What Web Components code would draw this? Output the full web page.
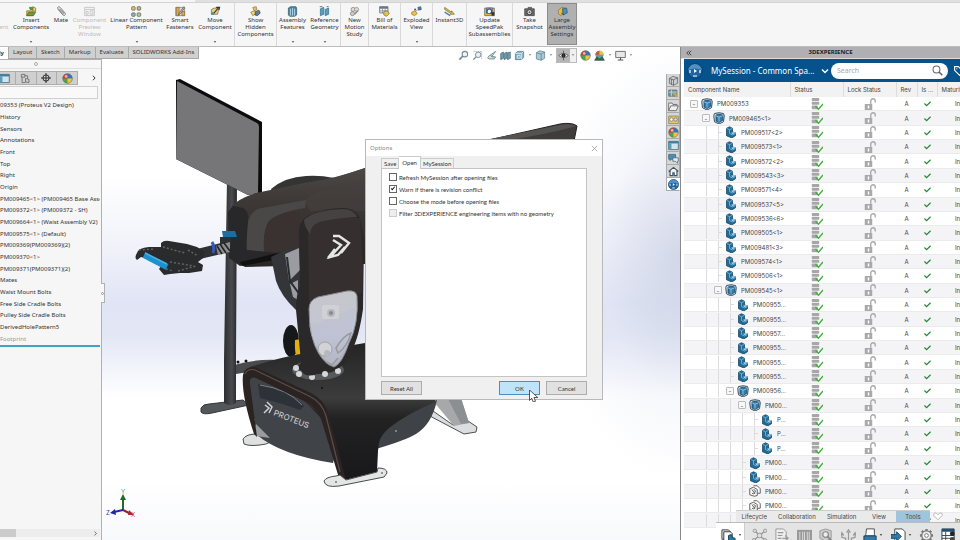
<!DOCTYPE html>
<html lang="en">
<head>
<meta charset="utf-8">
<title>Proteus V2 Design</title>
<style>
  html, body { margin: 0; height: 100%; overflow: hidden; }
  body { font-family: "Noto Sans", "Open Sans", sans-serif; font-size: 6px; line-height: 7px; color: #333; }
</style>
</head>
<body>
<cad-app></cad-app>

<script>
// All icons share a 16x16 box
const ICONS = {
  insert: '<path d="M1 7h9v7H1z" fill="#e6b83c" stroke="#8a6d1b"/><path d="M5 2h5l1 3H6z" fill="#57a04a" stroke="#2f6b2a"/><path d="M10 1l4 2v5l-4-1z" fill="#f1d064" stroke="#7b6a2a"/><path d="M1 14l3-5h10l-3 5z" fill="#6d9a3c" stroke="#4c6330"/>',
  clip: '<path d="M3 5l7 8c2 2 5 0 3-3L6 2C4 0 1 2 3 4l7 7c1 1 2 0 1-1L5 4" fill="none" stroke="#777" stroke-width="1.4"/>',
  preview: '<path d="M1 2h14v12H1zM1 5h14M3 8h3v4H3zM9 7h4v5H9z" fill="none" stroke="#c4c4c4" stroke-width="1.3"/>',
  pattern: '<g fill="#e3c66a" stroke="#555"><rect x="1" y="1" width="5" height="5" rx="1"/><rect x="9" y="1" width="5" height="5" rx="1" fill="#a8c18d"/><rect x="1" y="10" width="5" height="5" rx="1" fill="#8fb4c9"/><rect x="9" y="10" width="5" height="5" rx="1" fill="#b9c98b"/></g>',
  fasteners: '<path d="M1 2h13v12H1z" fill="#ddd" stroke="#777"/><path d="M2 2h4v12H2zM10 8h4v6h-4z" fill="#e0a94b" stroke="#8d6a32"/><path d="M13 1L6 10l-1 3 3-2 6-8z" fill="#bbb" stroke="#555"/>',
  move: '<path d="M2 5l4-2h7l-2 9H2z" fill="#e9cd77" stroke="#665"/><path d="M5 11l7-8M9 2l5 0-1 4" fill="none" stroke="#333" stroke-width="1.5"/><path d="M2 9l4 0v4H2z" fill="#4f8f9f"/>',
  show: '<path d="M4 2l5-1 1 4-4 2z" fill="#edc454" stroke="#8d722c"/><path d="M1 9l6-2 2 4-5 3z" fill="#f3d77b" stroke="#8d722c"/><path d="M8 8l5-2 2 4-4 4-4-1z" fill="#667b93" stroke="#33485f"/>',
  assembly: '<path d="M2 3l3-2h8l1 2v10l-3 2H4l-2-2z" fill="#4688a8" stroke="#2d566b"/><path d="M5 4v10M8 3v11M11 4v10" stroke="#b5d8e6" stroke-width="1.3"/>',
  geometry: '<path d="M2 4l5-2v10l-5 2zM9 5l5-2v9l-5 2z" fill="#57a0bf" stroke="#2d6b8a"/><path d="M1 1h4M11 1l3 0" stroke="#333"/>',
  motion: '<circle cx="6" cy="5" r="3" fill="#ddd" stroke="#777"/><circle cx="11" cy="5" r="3" fill="#e6d6d6" stroke="#887"/><circle cx="5" cy="11" r="3" fill="#ccc" stroke="#777"/><path d="M8 12l5-5" stroke="#888" stroke-width="2"/>',
  bom: '<path d="M1 1h12v9H1z" fill="#fff" stroke="#446"/><path d="M1 1h12v3H1z" fill="#678"/><path d="M5 4v6M9 4v6M1 7h12" stroke="#778"/><path d="M7 8l5-1 3 4-4 4-4-2z" fill="#e8c24f" stroke="#5f7a36"/>',
  exploded: '<path d="M1 9l5-2 3 4-4 3-4-2z" fill="#ecc44a" stroke="#8d722c"/><path d="M10 2l4-1 1 4-4 1z" fill="#4b83a8" stroke="#284f6b"/><path d="M7 8l3-3" stroke="#777"/><circle cx="6" cy="5" r="1.5" fill="#557"/>',
  instant: '<path d="M1 2l10 7 0-2 4 5-6 0 1-1L1 5z" fill="#eac64d" stroke="#6e6330"/><path d="M1 9l8 5" stroke="#4b83a8" stroke-width="2"/>',
  update: '<path d="M1 3h14v11H1z" fill="#e8bf4c" stroke="#555"/><path d="M4 3h8v8H4z" fill="#fff" stroke="#335"/><path d="M5 10a3.500 3.500 0 1 1 4 1" fill="none" stroke="#245b86" stroke-width="2"/><path d="M11 9h4v5h-4z" fill="#333"/>',
  camera: '<path d="M1 4h4l1-2h5l1 2h3v10H1z" fill="#666" stroke="#444"/><circle cx="8" cy="9" r="3.500" fill="#eee" stroke="#222"/><circle cx="8" cy="9" r="1.500" fill="#555"/>',
  large: '<path d="M2 6l5-4 5 1-4 3 1 4-3 4-4-3z" fill="#edbd3f" stroke="#8d722c"/><path d="M8 4l6-1 1 7-6 3z" fill="#4a90b7" stroke="#285a78"/><path d="M6 10l4 3" stroke="#333"/>',
  zoomfit: '<circle cx="10" cy="6" r="4" fill="#eef4f7" stroke="#789" stroke-width="1.500"/><path d="M7 9l-5 5" stroke="#789" stroke-width="2.500"/>',
  zoomarea: '<path d="M2 2h12v11" fill="none" stroke="#8899a3" stroke-dasharray="2 1"/><circle cx="9" cy="7" r="4" fill="#e8f0f4" stroke="#789" stroke-width="1.300"/><path d="M6 10l-4 4" stroke="#789" stroke-width="2"/>',
  prev: '<path d="M14 2L4 9q-3 3 0 4h8l2-3H8z" fill="#dbe6ea" stroke="#688" stroke-width="1.300"/><path d="M6 8l6 2" stroke="#688"/>',
  section: '<path d="M1 5l4-2v9l-4 2zM6 5l4-2v9l-4 2zM11 4l4-1v9l-4 2z" fill="#6f9eae" stroke="#456874"/>',
  orient: '<path d="M2 5l3-3h9v9l-3 3H2z" fill="#86b3c3" stroke="#4d7381"/><path d="M2 5h9v9M11 5l3-3M5 8h4v4H5z" fill="none" stroke="#eaf4f7"/>',
  cube: '<path d="M2 4l5-3 7 2v9l-5 3-7-2z" fill="#a7cbd7" stroke="#557b88"/><path d="M2 4l7 2 5-3M9 6v9" fill="none" stroke="#557b88"/>',
  eye: '<path d="M1 8q7-6 14 0-7 6-14 0z" fill="#eee" stroke="#444"/><circle cx="8" cy="8" r="3" fill="#222"/><path d="M8 1v14" stroke="#444"/>',
  ball: '<circle cx="8" cy="8" r="7" fill="#4aa54a"/><path d="M8 8V1a7 7 0 0 1 7 7z" fill="#3a6fc4"/><path d="M8 8V1a7 7 0 0 0-7 7z" fill="#d43d36"/><path d="M8 8h7a7 7 0 0 1-7 7z" fill="#f0c53c"/><circle cx="6" cy="5" r="2" fill="#fff" opacity=".6"/><circle cx="8" cy="8" r="7" fill="none" stroke="#666" stroke-width=".8"/>',
  scene: '<circle cx="8" cy="7" r="6" fill="#5a9"/><path d="M8 7V1a6 6 0 0 0-6 6z" fill="#d8523c"/><path d="M8 7V1a6 6 0 0 1 6 6z" fill="#e6c34c"/><path d="M1 15l3-5 4 3 4-3 3 5z" fill="#356b49" stroke="#344"/>',
  monitor: '<path d="M1 2h14v9H1z" fill="#e4eaee" stroke="#666" stroke-width="1.300"/><path d="M8 11v3M4 14.500h8" stroke="#555" stroke-width="1.500"/>',
  list: '<path d="M1 2h14v12H1z" fill="#d3e4eb" stroke="#446f84" stroke-width="1.300"/><path d="M1 2h14v3H1z" fill="#3e7f9f"/><path d="M1 5h4v9H1z" fill="#5b9cb8"/>',
  props: '<path d="M2 2h5v4H2zM7 4h4v4M3 6v8h5" fill="none" stroke="#666" stroke-width="1.200"/><path d="M8 8l5 1v5l-5-1z" fill="#ccc" stroke="#555"/>',
  target: '<circle cx="8" cy="8" r="5" fill="none" stroke="#222" stroke-width="1.500"/><path d="M8 0v16M0 8h16" stroke="#222" stroke-width="1.500"/>',
  box3d: '<path d="M2 5l5-3 7 2v8l-6 3-6-3z" fill="#c9cdd0" stroke="#555"/><path d="M2 5l6 2 6-3M8 7v8M5 6v8" fill="none" stroke="#555"/>',
  library: '<path d="M1 3h12v9H1z" fill="#6c99a9" stroke="#4f6670"/><path d="M1 6h12M5 3v9" stroke="#dde"/><path d="M8 7l6 6" stroke="#d5a73b" stroke-width="3"/>',
  folder: '<path d="M1 14V3h5l1 2h6v2" fill="#f7f7f7" stroke="#666" stroke-width="1.300"/><path d="M1 14l3-7h11l-3 7z" fill="#f0f0f0" stroke="#666" stroke-width="1.300"/>',
  toolbox: '<path d="M1 3h14v11H1z" fill="#edc95d" stroke="#776"/><circle cx="5" cy="8" r="2.500" fill="#fff" stroke="#666"/><circle cx="11" cy="8" r="2.500" fill="#ddd" stroke="#666"/>',
  forum: '<path d="M1 2h10v7H5l-2 2V9H1z" fill="#4a8db0" stroke="#305e78"/><path d="M7 7h8v5h-1v3l-3-3H7z" fill="#e3eef3" stroke="#456"/>',
  house: '<path d="M1 8l7-6 7 6M3 7v7h4v-4h2v4h4V7" fill="#fff" stroke="#3a5567" stroke-width="1.600"/>',
  compass: '<circle cx="8" cy="8" r="7.300" fill="#1c66a3" stroke="#0b3f6e"/><path d="M8 1a7 7 0 0 1 7 6q-7-3-14 0a7 7 0 0 1 7-6z" fill="#6ba3cf" opacity=".7"/><path d="M7 6l3 2-3 2z" fill="#fff"/><path d="M3 7v3M13 7v3M6 13h4" stroke="#fff" stroke-width="1.200"/>',
  search: '<circle cx="6.500" cy="6.500" r="5" fill="none" stroke="#666" stroke-width="1.500"/><path d="M10 10l5 5" stroke="#666" stroke-width="2.200"/>',
  tag: '<path d="M1 1h6l8 8-6 6-8-8z" fill="none" stroke="#fff" stroke-width="1.800"/><circle cx="4.500" cy="4.500" r="1" fill="#fff"/>',
  asm: '<path d="M2 2l6-1 6 1 1 3-1 8-6 3-6-3-1-8z" fill="#d5e2ea" stroke="#33495c" stroke-width="1.300"/><path d="M4 4l4-1 5 1v7l-5 3-4-2z" fill="#2f7bab" stroke="#123f62"/><path d="M4 5l4 2 5-2M8 7v6" fill="none" stroke="#a9d7f0"/>',
  part: '<path d="M2 3l4-2 4 2v5l4 1v4l-5 3-7-3z" fill="#216a98" stroke="#134562"/><path d="M2 3l4 2 4-2M6 5v5l4 2 4-2" fill="none" stroke="#86c0de"/><path d="M8 9l4-1 2 1-4 2z" fill="#a4d3ec"/>',
  doc: '<path d="M6 1h5l4 4v6l-4 0" fill="#fafafa" stroke="#555" stroke-width="1.200"/><path d="M1 5l5-2 5 3v8l-4 1-6-2z" fill="#fafafa" stroke="#555" stroke-width="1.200"/><path d="M4 6l4 6M4 11q2 2 4-1t-2-4" fill="none" stroke="#555" stroke-width="1.200"/>',
  db: '<g fill="#a7a7a7"><rect x="1" y="0" width="10" height="4" rx="1"/><rect x="1" y="5" width="10" height="4" rx="1"/><rect x="1" y="10" width="8" height="5" rx="1"/></g><path d="M6 11l4 4 6-7" fill="none" stroke="#3fae3a" stroke-width="1.800"/>',
  lock: '<path d="M1 8h10v8H1z" fill="#a9a9a9"/><path d="M9 8V4a3 3 0 0 1 6 0v2" fill="none" stroke="#a9a9a9" stroke-width="1.800"/><path d="M6 10v4" stroke="#fff" stroke-width="2"/>',
  check: '<path d="M1 8l5 5 9-9" fill="none" stroke="#238a33" stroke-width="2.800"/>',
  sheets: '<path d="M1 2h7l2 2v8H1z" fill="#eee" stroke="#333"/><path d="M3 4h7l2 2v8H3z" fill="#fff" stroke="#333"/><path d="M8 8l3-1 1 3 3 1v4l-4 1-3-2z" fill="#2c76a5" stroke="#134562"/>',
  network: '<g fill="#ddd" stroke="#999"><path d="M8 8L3 3M8 8l6-5M8 8l-6 5M8 8l6 5" stroke-width="1.500"/><circle cx="8" cy="8" r="2.500"/><circle cx="3" cy="3" r="1.800"/><circle cx="14" cy="3" r="1.800"/><circle cx="2" cy="13" r="1.800"/><circle cx="14" cy="13" r="1.800"/></g>',
  page: '<path d="M2 1h8l3 3v11H2z" fill="#eee" stroke="#999"/><path d="M4 5h6M4 8h5M4 11h4M9 11h6M12 8l3 3-3 3" fill="none" stroke="#999" stroke-width="1.300"/>',
  bars: '<path d="M0 2h16v13H0z" fill="#999"/><path d="M3 4v10M6 4v10M8 4v10M11 4v10M13 4v10" stroke="#ddd"/>',
  find: '<path d="M1 3l6-2 6 2v8l-6 3-6-3z" fill="#ccc" stroke="#999"/><circle cx="7" cy="7" r="3" fill="#eee" stroke="#888" stroke-width="1.300"/><path d="M9 9l6 6" stroke="#888" stroke-width="2"/>',
  arrows: '<path d="M8 15V4M5 15v-4l-4-1V6M11 15v-4l4-1V6M6 5l2-3 2 3M0 8l1-3 2 3M13 8l2-3 1 3" fill="none" stroke="#999" stroke-width="1.300"/>',
  printer: '<path d="M4 1h9v8H3z" fill="#fff" stroke="#444"/><path d="M1 9h14v6H1z" fill="#2f7bab" stroke="#234"/>',
  export: '<path d="M4 1h8l3 3v11H4z" fill="#fff" stroke="#444"/><path d="M0 7h6V4l5 5-5 5v-3H0z" fill="#2f7bab" stroke="#174b70"/>',
  gear: '<path d="M8 1v14M1 8h14M3 3l10 10M13 3L3 13" stroke="#777" stroke-width="2.500"/><circle cx="8" cy="8" r="5" fill="#eee" stroke="#777" stroke-width="1.300"/><circle cx="8" cy="8" r="2" fill="#fff" stroke="#777"/>',
  sheet: '<path d="M1 1h13v14H1z" fill="#fff" stroke="#234"/><path d="M1 1h13v3H1z" fill="#1f4f74"/><path d="M1 8h13M1 11h13M5 4v11" stroke="#345"/><circle cx="12" cy="6" r="2.500" fill="#222"/><circle cx="12" cy="12" r="2.500" fill="#444"/>',
  cursor: '<path d="M2 0v14l3-3 2 5 3-1-2-5h5z" fill="#fff" stroke="#222"/>',
  heart: '<path d="M8 14L1 7q0-5 4-4l3 3 3-3q4-1 4 4z" fill="#fff" stroke="#aaa" stroke-width="1.300"/>',
  down: '<path d="M2 5l6 6 6-6" fill="none" stroke="currentColor" stroke-width="2.800"/>',
  right: '<path d="M5 2l6 6-6 6" fill="none" stroke="currentColor" stroke-width="2.400"/>',
  collapse: '<path d="M8 2L2 8l6 6M14 2L8 8l6 6" fill="none" stroke="currentColor" stroke-width="2"/>',
  close: '<path d="M2 2l12 12M14 2L2 14" stroke="currentColor" stroke-width="1.500"/>',
  caret: '<path d="M3 5h10l-5 6z" fill="currentColor"/>'
};

class CadIcon extends HTMLElement {
  constructor() {
    super();
    this.attachShadow({ mode: 'open' });
  }

  connectedCallback() {
    const size = this.getAttribute('size') || 12;
    this.shadowRoot.innerHTML = `
      <style>
        :host { display: block; flex: none; width: ${size}px; height: ${size}px; white-space: normal; }
        svg { display: block; width: 100%; height: 100%; }
      </style>
      <svg viewBox="0 0 16 16" aria-hidden="true">${ICONS[this.getAttribute('name')] || ''}</svg>`;
  }
}
customElements.define('cad-icon', CadIcon);

/* ---------- ribbon ---------- */

class RibbonButton extends HTMLElement {
  constructor() {
    super();
    this.attachShadow({ mode: 'open' });
  }

  connectedCallback() {
    this.shadowRoot.innerHTML = `
      <style>
        :host { display: block; border-right: 1px solid transparent; }
        :host([line]) { border-right-color: #d9d9d9; }
        :host([on]) { background: #b0b0b0; border: 1px solid #8c8c8c; margin-bottom: 1px; }
        :host([off]) { color: #bbb; }
        button {
          all: unset; box-sizing: border-box; width: 100%; height: 100%; padding-top: 3px;
          display: flex; flex-direction: column; align-items: center; text-align: center;
        }
        :host([on]) button { padding-top: 2px; }
        span { white-space: pre; margin-bottom: auto; }
        .caret { margin-bottom: 2px; color: #333; }
      </style>
      <button ${this.hasAttribute('off') ? 'disabled' : ''}>
        <cad-icon name="${this.getAttribute('icon')}" size="11"></cad-icon>
        <span><slot></slot></span>
        ${this.hasAttribute('menu') ? '<cad-icon class="caret" name="caret" size="4"></cad-icon>' : ''}
      </button>`;
  }
}
customElements.define('ribbon-button', RibbonButton);

const ribbonTemplate = document.createElement('template');
ribbonTemplate.innerHTML = `
  <style>
    :host { display: block; background: #f6f6f6; border-bottom: 1px solid #bcbcbc; overflow: hidden; }
    .top { display: flex; height: 2px; border-bottom: 1px solid #d4d4d4; }
    .top i:first-child { width: 195px; }
    .top i:last-child { flex: 1; background: #e0e0e0; }
    .bar {
      display: grid; height: 43px; margin-left: -27px;
      grid-template-columns: 38px 41px 19px 38px 56px 31px 39px 42px 32px 32px 28px 32px 32px 34px 46px 34px 30px;
    }
  </style>
  <div class="top"><i></i><i></i></div>
  <div class="bar">
    <ribbon-button off>Edit
Component</ribbon-button>
    <ribbon-button icon="insert" menu>Insert
Components</ribbon-button>
    <ribbon-button icon="clip">Mate</ribbon-button>
    <ribbon-button icon="preview" off>Component
Preview
Window</ribbon-button>
    <ribbon-button icon="pattern" menu>Linear Component
Pattern</ribbon-button>
    <ribbon-button icon="fasteners">Smart
Fasteners</ribbon-button>
    <ribbon-button icon="move" menu line>Move
Component</ribbon-button>
    <ribbon-button icon="show" line>Show
Hidden
Components</ribbon-button>
    <ribbon-button icon="assembly" menu>Assembly
Features</ribbon-button>
    <ribbon-button icon="geometry" menu line>Reference
Geometry</ribbon-button>
    <ribbon-button icon="motion" line>New
Motion
Study</ribbon-button>
    <ribbon-button icon="bom" line>Bill of
Materials</ribbon-button>
    <ribbon-button icon="exploded" menu line>Exploded
View</ribbon-button>
    <ribbon-button icon="instant" line>Instant3D</ribbon-button>
    <ribbon-button icon="update" line>Update
SpeedPak
Subassemblies</ribbon-button>
    <ribbon-button icon="camera">Take
Snapshot</ribbon-button>
    <ribbon-button icon="large" on>Large
Assembly
Settings</ribbon-button>
  </div>
`;
customElements.define('cad-ribbon', class extends HTMLElement {
  constructor() {
    super();
    this.attachShadow({ mode: 'open' }).appendChild(ribbonTemplate.content.cloneNode(true));
  }
});

/* ---------- command tabs and view toolbar ---------- */

const tabsTemplate = document.createElement('template');
tabsTemplate.innerHTML = `
  <style>
    :host { display: flex; height: 12px; }
    button {
      all: unset; box-sizing: border-box; height: 12px; padding: 0 4px; line-height: 11px;
      background: #d0d0d0; border: solid #a8a8a8; border-width: 0 1px 1px 0; white-space: nowrap;
    }
    button.on { background: #fff; font-weight: bold; width: 9px; padding: 0 4px 0 0; direction: rtl; overflow: hidden; border-bottom: 0; }
  </style>
  <button class="on">Assembly</button>
  <button>Layout</button>
  <button>Sketch</button>
  <button>Markup</button>
  <button>Evaluate</button>
  <button>SOLIDWORKS Add-Ins</button>
`;
customElements.define('command-tabs', class extends HTMLElement {
  constructor() {
    super();
    this.attachShadow({ mode: 'open' }).appendChild(tabsTemplate.content.cloneNode(true));
  }
});

const viewTemplate = document.createElement('template');
viewTemplate.innerHTML = `
  <style>
    :host { display: flex; align-items: center; gap: 3px; height: 14px; color: #777; }
    button { all: unset; display: flex; align-items: center; gap: 3px; height: 13px; }
    .eye { gap: 1px; border: 1px solid #bbb; padding-right: 1px; background: #f0f0f0; }
    .eye span { background: #b5b5b5; padding: 1px; }
  </style>
  <button aria-label="Zoom to fit"><cad-icon name="zoomfit" size="11"></cad-icon></button>
  <button aria-label="Zoom to area"><cad-icon name="zoomarea" size="11"></cad-icon></button>
  <button aria-label="Previous view"><cad-icon name="prev" size="11"></cad-icon></button>
  <button aria-label="Section view"><cad-icon name="section" size="11"></cad-icon></button>
  <button aria-label="View orientation"><cad-icon name="orient" size="11"></cad-icon><cad-icon name="caret" size="4"></cad-icon></button>
  <button aria-label="Display style"><cad-icon name="cube" size="11"></cad-icon><cad-icon name="caret" size="4"></cad-icon></button>
  <button class="eye" aria-label="Hide/show items"><span><cad-icon name="eye" size="11"></cad-icon></span><cad-icon name="caret" size="4"></cad-icon></button>
  <button aria-label="Edit appearance"><cad-icon name="ball" size="11"></cad-icon></button>
  <button aria-label="Apply scene"><cad-icon name="scene" size="11"></cad-icon><cad-icon name="caret" size="4"></cad-icon></button>
  <button aria-label="View settings"><cad-icon name="monitor" size="11"></cad-icon><cad-icon name="caret" size="4"></cad-icon></button>
`;
customElements.define('view-toolbar', class extends HTMLElement {
  constructor() {
    super();
    this.attachShadow({ mode: 'open' }).appendChild(viewTemplate.content.cloneNode(true));
  }
});

/* ---------- feature tree ---------- */

const treeTemplate = document.createElement('template');
treeTemplate.innerHTML = `
  <style>
    :host {
      display: flex; flex-direction: column; box-sizing: border-box; width: 102px;
      background: #f6f6f6; border: solid #b0b0b0; border-width: 1px 1px 0 0; position: relative;
    }
    .grip { height: 8px; border-bottom: 1px solid #e0e0e0; padding-left: 34px; display: flex; align-items: center; }
    .grip i { width: 2px; height: 2px; border: 1px solid #aaa; border-radius: 50%; }
    .tabs { display: flex; align-items: center; margin-top: 2px; height: 14px; margin-left: -5px; }
    .tabs button {
      all: unset; box-sizing: border-box; width: 21px; height: 14px; display: flex; align-items: center; justify-content: center;
      background: #d0d0d0; border: 1px solid #adadad; border-left: 0;
    }
    .tabs .more { background: none; border: 0; margin-left: 9px; width: 14px; color: #222; }
    input { box-sizing: border-box; width: 99px; height: 13px; margin: 1px 0 1px -1px; padding: 0; border: 1px solid #d0d0d0; background: #f9f9f9; font: inherit; }
    ul { list-style: none; margin: 0 1px 0 0; padding: 0; height: 245px; display: flex; flex-direction: column; border-bottom: 2px solid #4a9dc9; }
    li { flex: 1; display: flex; align-items: center; white-space: nowrap; overflow: hidden; }
    li:last-child { color: #999; }
    .handle {
      position: absolute; left: 101px; top: 223px; width: 4px; height: 20px; padding: 0;
      border: 1px solid #b0b0b0; border-left: 0; background: #f8f8f8;
      display: flex; align-items: center; justify-content: center;
    }
    .handle i { width: 1px; height: 1px; border: 1px solid #999; border-radius: 50%; }
    .scroll { margin: auto 1px 3px 0; height: 8px; background: #ededed; display: flex; justify-content: space-between; align-items: center; padding-right: 2px; color: #444; }
    .scroll i { width: 16px; height: 8px; background: #cbcbcb; }
  </style>
  <div class="grip"><i></i></div>
  <div class="tabs">
    <button aria-label="Features"><cad-icon name="list" size="11"></cad-icon></button>
    <button aria-label="Properties"><cad-icon name="props" size="11"></cad-icon></button>
    <button aria-label="Dimensions"><cad-icon name="target" size="10"></cad-icon></button>
    <button aria-label="Display"><cad-icon name="ball" size="11"></cad-icon></button>
    <button class="more" aria-label="More"><cad-icon name="right" size="6"></cad-icon></button>
  </div>
  <input type="text" aria-label="Filter">
  <ul></ul>
  <div class="scroll"><i></i><cad-icon name="right" size="5"></cad-icon></div>
  <button class="handle" aria-label="Collapse"><i></i></button>
`;

const FEATURES = [
  '09353 (Proteus V2 Design)', 'History', 'Sensors', 'Annotations', 'Front', 'Top', 'Right', 'Origin',
  'PM009465<1> (PM009465 Base Asse', 'PM009372<1> (PM009372 - SH)', 'PM009664<1> (Waist Assembly V2)',
  'PM009575<1> (Default)', 'PM009369(PM009369)(2)', 'PM009370<1>', 'PM009371(PM009371)(2)', 'Mates',
  'Waist Mount Bolts', 'Free Side Cradle Bolts', 'Pulley Side Cradle Bolts', 'DerivedHolePattern5', 'Footprint'
];

customElements.define('feature-tree', class extends HTMLElement {
  constructor() {
    super();
    this.attachShadow({ mode: 'open' }).appendChild(treeTemplate.content.cloneNode(true));
    const list = this.shadowRoot.querySelector('ul');
    FEATURES.forEach((text) => {
      const item = document.createElement('li');
      item.textContent = text;
      list.appendChild(item);
    });
  }
});

/* ---------- the model ---------- */

const modelTemplate = document.createElement('template');
modelTemplate.innerHTML = `
  <style>
    :host {
      display: block; overflow: hidden;
      background:
        radial-gradient(ellipse 130px 220px at 100% 43%, rgba(198, 205, 226, .7), rgba(225, 229, 243, .3) 60%, transparent),
        linear-gradient(#fff 26%, #f2f3fa 40%, #e0e4f4 52%, #e2e6f5 58%, #fff 71%, #fff 88%, #f8f9fc);
    }
    svg { display: block; width: 680px; height: 493px; }
    text { font-family: Inter, sans-serif; }
  </style>
  <svg viewBox="0 47 680 493">
    <defs>
      <linearGradient id="arm" x1="0" y1="0" x2="0" y2="1"><stop offset="0" stop-color="#4b4846"/><stop offset=".35" stop-color="#3d3836"/><stop offset="1" stop-color="#292625"/></linearGradient>
      <linearGradient id="shell" x1="0" y1="0" x2="0" y2="1"><stop offset="0" stop-color="#242424"/><stop offset=".2" stop-color="#303030"/><stop offset=".4" stop-color="#3c3c3c"/><stop offset=".55" stop-color="#222223"/><stop offset="1" stop-color="#18181a"/></linearGradient>
      <linearGradient id="glass" x1="0" y1="0" x2="0" y2="1"><stop offset="0" stop-color="#c6c7ca"/><stop offset=".6" stop-color="#c3c5d6"/><stop offset="1" stop-color="#a9acb2"/></linearGradient>
      <linearGradient id="pole"><stop offset="0" stop-color="#2c2e30"/><stop offset=".6" stop-color="#494b4e"/><stop offset="1" stop-color="#26282a"/></linearGradient>
    </defs>

    <!-- rear feet and stand -->
    <path d="M428 415l5-4 20 14 15-4 9 6-1 5-12 2z" fill="#dcdddd" stroke="#4c4f51"/>
    <path d="M428 395h32l9 28-15 3z" fill="#a6a8aa"/><path d="M446 395h14l9 28-8 1z" fill="#8c8f91"/>
    <path d="M234 365q20-6 44-5v7l-42 7z" fill="#484a4c"/>
    <path d="M201 408q2-4 8-4l34-4 6 5-37 8q-9 2-11-1z" fill="#54575a" stroke="#34373a"/>
    <path d="M227 180h10l-1 180v43q-6 4-12 0v-43z" fill="url(#pole)"/>
    <circle cx="238" cy="362" r="1.500" fill="#111"/><circle cx="246" cy="361" r="1.500" fill="#111"/>

    <!-- monitor -->
    <path d="M176 80l4-1 82 43v71l-14 2-72-36z" fill="#0c0c0c"/>
    <path d="M177 81l80 42q2 1 2 4l-1 66-10 2-72-36z" fill="#767678"/>

    <!-- arm -->
    <path d="M271 189q14-12 35-13 14-1 28 2l31-10v20l-90 10z" fill="#343434"/>
    <path d="M480 142l80-18q12-2 17 2l-4 20h-94z" fill="#3f3c3b" stroke="#222"/>
    <path d="M490 139l70-14q10-2 16 1-20 6-60 13z" fill="#555352"/>
    <path d="M229 213q2-12 27-20l48-10q34-5 61-15v96l-120 3-15-9z" fill="url(#arm)"/>
    <path d="M305 201q3-6 14-9l46-11v30h-55z" fill="#46413f" opacity=".6"/>
    <path d="M247 250q-4-40 15-42l44-8-1 8q-27 4-36 13-5 6-5 31z" fill="#4a4846"/>
    <path d="M264 252q-2-26 8-33 10-6 28-8v40l-20 3z" fill="#3a3230"/>
    <path d="M228 212l5-6 10 2q6 3 5 12l-2 30 42 4-48 12-11-8z" fill="#28282a"/>
    <path d="M240 262l50-12 0 7-48 9z" fill="#111"/>
    <path d="M222 231h13l2 6h-14z" fill="#1a6f9e"/><path d="M220 237h11v10h-11z" fill="#2d3033"/>
    <!-- gripper -->
    <path d="M197 249l32-8 1 11-30 7z" fill="#303132"/>
    <path d="M216 246l14-4v10l-12 3z" fill="#8b8d90"/><path d="M217 246l5 8M220 244l6 9M224 243l6 8" stroke="#222" stroke-width="1.500"/>
    <path d="M212 242q3 5 1 11" stroke="#3656b9" stroke-width="3" fill="none"/>
    <path d="M137 253q1-5 12-6l12 0 0-4q3-3 8-2l18 3 10 3 8 5-2 6-5 4 5 3-1 6-13 2-9 0-10 1-6 1-5-6 4-6-22-6-4 3q-3-2 0-7z" fill="#292b2d"/>
    <path d="M139 250l16-1M163 247l22 6M170 262l24 4M178 271l18-5M188 250l10 6M166 269l7 2" stroke="#606468" stroke-dasharray="2 2" stroke-width="1.500"/>
    <path d="M144 255l23 12" stroke="#1b91d0" stroke-width="6"/><path d="M145 253l22 11" stroke="#45b3e6" stroke-width="1.500"/>

    <!-- linkage behind the upright -->
    <path d="M271 257l16-8 15 1 3 51-9 9q-15-14-20-29z" fill="#333538"/>
    <path d="M285 254l14-6 1 22-11 11zM290 284l8-4v20l-5-3z" fill="#9a9ca1"/><path d="M287 257l3 24 10 14" stroke="#2a2c2f" stroke-width="2" fill="none"/>
    <ellipse cx="291" cy="341" rx="8" ry="16" fill="#17181a"/>
    <path d="M295 340l6-1v20q-7 1-6-19z" fill="#e2ae16"/>

    <!-- base -->
    <path d="M243 439q3-5 14-5l18 6-9 4q-15 3-22 0z" fill="#dedfdf" stroke="#4a4c4e"/>
    <path d="M247 378l10 57q24 20 76 28l10-40-80-50z" fill="#404347"/>
    <path d="M258 384q30 4 46 22l-4 4q-22-8-40-12z" fill="#2d3238"/><path d="M260 385q28 4 42 20" stroke="#7d8387" fill="none"/>
    <path d="M256 424v12l14 2z" fill="#999c9e"/>
    <path d="M376 449q30-9 40-15 16-10 21-34l-60 22z" fill="#3f4247"/>
    <path d="M250 367q30-10 62-15l53-9h72l-2 59q-32 14-47 27-10 8-10 22l-1 21-32 8-22-60-20-20-55-26z" fill="url(#shell)"/>
    <path d="M243 375q2-9 12-8l56 26q14 7 18 22l17 65-7-2-17-56q-4-14-16-20l-50-24q-7-2-6 6l7 53-3-3q-13-40-11-59z" fill="#2a2321"/>
    <path d="M245 374q3-6 10-4l54 26q13 6 17 20l14 56" fill="none" stroke="#5a4f4c" stroke-width="1.200"/>
    <circle cx="322" cy="388" r="1" fill="#111"/><circle cx="396" cy="431" r="1" fill="#999"/>

    <!-- bolts -->
    <ellipse cx="318" cy="370" rx="26" ry="10" fill="#56585a"/><ellipse cx="318" cy="367" rx="20" ry="7" fill="#29292a"/>
    <g fill="#d5d7d8"><circle cx="296" cy="368" r="3"/><circle cx="299" cy="374" r="3"/><circle cx="312" cy="377" r="3"/><circle cx="325" cy="374" r="3"/><circle cx="338" cy="371" r="3"/></g>

    <!-- upright -->
    <path d="M299 229q1-10 13-15 14-6 30-6 14 0 18 11l4 20-1 70q-4 28-11 41-8 18-17 19-8 0-15-8l-3 13q-10 4-15-2l-6-62q0-16 4-24z" fill="#2a2828"/>
    <path d="M308 224q20-8 52-6l3 50-1 25-40 6-13 4z" fill="#35302f"/>
    <path d="M304 220q10-10 38-11 12 0 15 8-22 1-38 5-8 3-9 12-6-8-6-14z" fill="#454241"/>
    <path d="M309 309q0-9 9-12l29-6q9-1 10 5 2 28-8 47-7 21-15 24-8-2-15-13-10-16-10-45z" fill="url(#glass)" stroke="#85878a"/>
    <path d="M309 325l12-3 34-14q-2 22-8 33-8 20-13 24-8-4-14-13-9-14-11-27z" fill="#bcbfd2" opacity=".5"/>
    <rect x="322" y="305" width="17" height="14" rx="2" fill="#d0d1d4"/><circle cx="331" cy="313" r="4" fill="#b6b8bc"/><circle cx="331" cy="313" r="2" fill="#858990"/>
    <circle cx="325" cy="349" r="7" fill="#d2d3d6" stroke="#a1a3a7"/><circle cx="327" cy="353" r="3" fill="#b5b8bd"/>
    <path d="M336 348q8-13 15-15-4 14-13 20zM326 362l6 3 6-7" fill="none" stroke="#979aa0" stroke-width="1.500"/>

    <!-- logos -->
    <g id="mark" fill="none" stroke="#e6e6e6" stroke-width="2.400"><path d="M333 236h6l10 7-8 10"/><path d="M333 240l8 5-11 12 8-2 7-8"/><path d="M328 258l7-9" /></g>
    <g fill="none" stroke="#d0d2d4" stroke-width="1.500"><path d="M267 402l5 5-3 6"/><path d="M265 405l4 3-5 5"/></g>
    <text x="273" y="415" font-size="8" font-weight="500" fill="#c5c7ca" transform="rotate(21 273 415)">PROTEUS</text>

    <!-- front foot -->
    <path d="M324 481q2-4 12-5l4-1 6 5 31-8 1-4q9 0 9 5l-3 4-45 9q-14 2-15-5z" fill="#e4e5e5" stroke="#4a4c4e"/>
    <circle cx="336" cy="482" r="1" fill="#777"/><circle cx="382" cy="473" r="1" fill="#777"/>

    <!-- axes -->
    <path d="M123 510v-11" stroke="#1e6b2a" stroke-width="2"/><path d="M120 500l3-6 3 6z" fill="#1e6b2a"/>
    <path d="M123 510l-9 2" stroke="#2525a5" stroke-width="2"/><path d="M115 509l-5 4 6 2z" fill="#2525a5"/>
    <path d="M123 510l6 3" stroke="#9d1f26" stroke-width="2"/><path d="M129 510l5 5-6 0z" fill="#b3222a"/>
    <text x="121" y="494" font-size="6" fill="#4d9a57">Y</text>
    <text x="106" y="515" font-size="6" fill="#3a3ac0">Z</text>
    <text x="131" y="517" font-size="6" fill="#c23b42">X</text>
  </svg>
`;
customElements.define('model-view', class extends HTMLElement {
  constructor() {
    super();
    this.attachShadow({ mode: 'open' }).appendChild(modelTemplate.content.cloneNode(true));
  }
});

/* ---------- task pane strip ---------- */

customElements.define('task-strip', class extends HTMLElement {
  constructor() {
    super();
    const names = ['box3d', 'library', 'folder', 'toolbox', 'ball', 'list', 'forum', 'house', 'compass'];
    this.attachShadow({ mode: 'open' }).innerHTML = `
      <style>
        :host { display: flex; flex-direction: column; width: 14px; }
        button {
          all: unset; box-sizing: border-box; height: 13px; display: flex; align-items: center; justify-content: center;
          background: #d6d6d6; border: 1px solid #aaa; border-top: 0;
        }
        button:first-child { border-top: 1px solid #aaa; }
        button:last-child { background: #fff; border-right-color: #fff; }
      </style>
      ${names.map((n) => `<button aria-label="${n}"><cad-icon name="${n}" size="11"></cad-icon></button>`).join('')}`;
  }
});

/* ---------- options dialog ---------- */

const dialogTemplate = document.createElement('template');
dialogTemplate.innerHTML = `
  <style>
    :host {
      display: block; box-sizing: border-box; width: 238px; background: #f0f0f0;
      border: 1px solid #b8b8b8; font-family: Lato, "Noto Sans", sans-serif; color: #333;
    }
    header { display: flex; align-items: center; justify-content: space-between; height: 16px; padding: 0 4px; background: #fff; color: #888; font-family: "Noto Sans", sans-serif; }
    .close { all: unset; color: #888; }
    main { padding: 0 15px 4px; }
    .tabs { display: flex; align-items: flex-end; height: 12px; }
    .tabs button {
      all: unset; box-sizing: border-box; height: 10px; line-height: 9px; padding: 0 2px; background: #f0f0f0;
      border: 1px solid #ccc; border-bottom: 0; border-left-width: 0;
    }
    .tabs button:first-child { border-left-width: 1px; }
    .tabs .on { height: 13px; line-height: 12px; background: #fff; margin-bottom: -1px; padding: 0 3px; }
    .pane { box-sizing: border-box; height: 209px; background: #fff; border: 1px solid #c4c4c4; padding: 2px 7px; }
    label { display: flex; align-items: center; height: 12px; gap: 2px; white-space: nowrap; }
    input { appearance: none; width: 8px; height: 8px; margin: 0; border: 1px solid #666; background: #fff; position: relative; }
    input:checked::after { content: ""; position: absolute; left: 2px; top: 0; width: 1px; height: 3px; border: solid #111; border-width: 0 1px 1px 0; transform: rotate(40deg); }
    input:disabled { border-color: #ccc; background: #eee; }
    footer { display: flex; gap: 6px; margin-top: 4px; }
    footer button { box-sizing: border-box; width: 41px; height: 14px; padding: 0; border: 1px solid #adadad; background: #e1e1e1; font: inherit; color: inherit; }
    footer button:first-child { margin-right: auto; }
    footer .ok { background: #bfe3f9; border-color: #4a8fc0; }
    .cursor { position: absolute; left: 162px; top: 250px; }
  </style>
  <header><span>Options</span><button class="close" aria-label="Close"><cad-icon name="close" size="7"></cad-icon></button></header>
  <main>
    <div class="tabs"><button>Save</button><button class="on">Open</button><button>MySession</button></div>
    <div class="pane">
      <label><input type="checkbox">Refresh MySession after opening files</label>
      <label><input type="checkbox" checked>Warn if there is revision conflict</label>
      <label><input type="checkbox">Choose the mode before opening files</label>
      <label><input type="checkbox" disabled>Filter 3DEXPERIENCE engineering items with no geometry</label>
    </div>
    <footer><button>Reset All</button><button class="ok">OK</button><button>Cancel</button></footer>
  </main>
  <cad-icon class="cursor" name="cursor" size="12"></cad-icon>
`;
customElements.define('options-dialog', class extends HTMLElement {
  constructor() {
    super();
    this.attachShadow({ mode: 'open' }).appendChild(dialogTemplate.content.cloneNode(true));
  }
});

/* ---------- MySession panel ---------- */

// [level, icon, name]; assemblies get a toggle
const COMPONENTS = [
  [0, 'asm', 'PM009353'], [1, 'asm', 'PM009465<1>'],
  [2, 'part', 'PM009517<2>'], [2, 'part', 'PM009573<1>'], [2, 'part', 'PM009572<2>'],
  [2, 'part', 'PM009543<3>'], [2, 'part', 'PM009571<4>'], [2, 'part', 'PM009537<5>'],
  [2, 'part', 'PM009536<6>'], [2, 'part', 'PM009505<1>'], [2, 'part', 'PM009481<3>'],
  [2, 'part', 'PM009574<1>'], [2, 'part', 'PM009506<1>'], [2, 'asm', 'PM009545<1>'],
  [3, 'part', 'PM00955...'], [3, 'part', 'PM00955...'], [3, 'part', 'PM00957...'],
  [3, 'part', 'PM00955...'], [3, 'part', 'PM00955...'], [3, 'part', 'PM00955...'],
  [3, 'asm', 'PM00956...'], [4, 'asm', 'PM00...'],
  [5, 'part', 'P...'], [5, 'part', 'P...'], [5, 'part', 'P...'],
  [4, 'part', 'PM00...'], [4, 'part', 'PM00...'], [4, 'doc', 'PM00...'], [4, 'doc', 'PM00...'],
  [4, 'doc', '']
];

const sessionTemplate = document.createElement('template');
sessionTemplate.innerHTML = `
  <style>
    :host {
      display: flex; flex-direction: column; position: relative; overflow: hidden; box-sizing: border-box;
      background: #fff; border-left: 1px solid #8a8a8a; font-family: Inter, "Liberation Sans", sans-serif; color: #444;
    }
    .caption { display: flex; align-items: center; height: 11px; background: #b0b0b4; padding: 0 5px; color: #222; border-bottom: 1px solid #ddd; }
    .caption b { flex: 1; text-align: center; font-family: "Noto Sans", sans-serif; padding-left: 14px; }
    .head {
      display: flex; align-items: center; height: 23px; margin-left: 3px; padding-left: 3px; background: #05528c;
      color: #fff; overflow: hidden;
    }
    h1 { flex: none; margin: 0 4px 0 8px; font: 8px/12px "Noto Sans", sans-serif; width: 106px; }
    .search { flex: none; box-sizing: border-box; display: flex; align-items: center; width: 117px; height: 16px; margin: 0 6px 0 2px; padding: 0 5px 0 6px; border-radius: 8px; background: #fff; }
    input { flex: 1; min-width: 0; border: 0; padding: 0; background: none; font: 7px/9px "Noto Sans", sans-serif; outline: 0; }
    input::placeholder { color: #aaa; }
    .grid { flex: 1; margin-left: 3px; padding-bottom: 12px; overflow: hidden; }
    table { border-collapse: collapse; table-layout: fixed; width: 312px; height: 100%; }
    th { box-sizing: border-box; height: 15px; padding: 0 0 0 4px; text-align: left; font-weight: normal; background: #f2f2f2; border-right: 1px solid #ddd; white-space: nowrap; overflow: hidden; }
    td { padding: 0; border-bottom: 1px solid #ebebeb; }
    tbody tr:nth-child(even) { background: #f4f4f6; }
    .name { display: flex; align-items: center; height: 13px; padding-left: 4px; white-space: nowrap; overflow: hidden; }
    .slot { flex: none; width: 12px; height: 15px; position: relative; }
    .slot.guide { background: linear-gradient(#dcdcdc, #dcdcdc) 6px 0 / 1px 100% no-repeat; }
    .slot.stub { background: linear-gradient(#dcdcdc, #dcdcdc) 6px 0 / 1px 100% no-repeat, linear-gradient(#dcdcdc, #dcdcdc) 6px 50% / 4px 1px no-repeat; }
    .toggle { all: unset; flex: none; box-sizing: border-box; width: 8px; height: 8px; margin: 0 2px; border: 1px solid #bbb; border-radius: 1px; background: #f8f8f8; text-align: center; line-height: 5px; }
    .name cad-icon { margin: 0 4px 0 1px; }
    .mid cad-icon { margin: auto; }
    .mid { text-align: center; }
    td:last-child { padding-left: 18px; white-space: nowrap; overflow: hidden; }
    .actions { position: absolute; right: 0; bottom: 0; width: 244px; }
    .tabs { display: flex; align-items: center; width: 207px; margin-left: 20px; height: 12px; }
    .tabs button { all: unset; box-sizing: border-box; flex: auto; min-width: 34px; height: 12px; line-height: 12px; text-align: center; background: #eaeaea; border-top: 1px solid #ccc; color: #444; }
    .tabs .on { background: #9fc5dd; }
    .tabs cad-icon { margin-left: 3px; }
    .tools { display: flex; height: 17px; background: #e4e4e4; border-top: 1px solid #bbb; overflow: hidden; justify-content: space-between; padding-right: 4px; color: #222; }
    .tools button { all: unset; display: flex; align-items: flex-start; padding-top: 5px; gap: 2px; }
    .tools button:first-child { background: #fff; padding: 5px 2px 0 5px; border-right: 1px solid #ccc; }
    .tools cad-icon[size="4"] { margin-top: 5px; }
  </style>
  <div class="caption"><cad-icon name="collapse" size="6"></cad-icon><b>3DEXPERIENCE</b></div>
  <div class="head">
    <cad-icon name="compass" size="16"></cad-icon>
    <h1>MySession - Common Spa...</h1>
    <cad-icon name="down" size="8"></cad-icon>
    <div class="search"><input type="search" placeholder="Search" aria-label="Search"><cad-icon name="search" size="11"></cad-icon></div>
    <cad-icon name="tag" size="10"></cad-icon>
  </div>
  <div class="grid">
    <table>
      <colgroup><col style="width:106px"><col style="width:53px"><col style="width:53px"><col style="width:21px"><col style="width:20px"><col></colgroup>
      <thead><tr><th>Component Name</th><th>Status</th><th>Lock Status</th><th>Rev</th><th>Is ...</th><th>Maturity State</th></tr></thead>
      <tbody></tbody>
    </table>
  </div>
  <div class="actions">
    <div class="tabs"><button>Lifecycle</button><button>Collaboration</button><button>Simulation</button><button>View</button><button class="on">Tools</button><cad-icon name="heart" size="10"></cad-icon></div>
    <div class="tools">
      <button aria-label="Insert"><cad-icon name="sheets" size="15"></cad-icon><cad-icon name="caret" size="4"></cad-icon></button>
      <button aria-label="Relations"><cad-icon name="network" size="15"></cad-icon></button>
      <button aria-label="Revise"><cad-icon name="page" size="15"></cad-icon></button>
      <button aria-label="Number"><cad-icon name="bars" size="15"></cad-icon></button>
      <button aria-label="Find"><cad-icon name="find" size="15"></cad-icon></button>
      <button aria-label="Route"><cad-icon name="arrows" size="15"></cad-icon></button>
      <button aria-label="Print"><cad-icon name="printer" size="14"></cad-icon><cad-icon name="caret" size="4"></cad-icon></button>
      <button aria-label="Export"><cad-icon name="export" size="15"></cad-icon><cad-icon name="caret" size="4"></cad-icon></button>
      <button aria-label="Settings"><cad-icon name="gear" size="15"></cad-icon></button>
      <button aria-label="Batch"><cad-icon name="sheet" size="15"></cad-icon></button>
    </div>
  </div>
`;

customElements.define('session-panel', class extends HTMLElement {
  constructor() {
    super();
    this.attachShadow({ mode: 'open' }).appendChild(sessionTemplate.content.cloneNode(true));
    const body = this.shadowRoot.querySelector('tbody');
    COMPONENTS.forEach(([level, type, name]) => {
      const row = document.createElement('tr');
      let indent = '';
      for (let i = 0; i < level; i++) {
        indent += `<span class="slot ${i > 0 ? 'guide' : ''}"></span>`;
      }
      indent += type === 'asm'
        ? '<button class="toggle" aria-label="Collapse">-</button>'
        : '<span class="slot stub"></span>';
      row.innerHTML = `
        <td><div class="name">${indent}<cad-icon name="${type}" size="12"></cad-icon><span class="label"></span></div></td>
        <td class="mid"><cad-icon name="db" size="12"></cad-icon></td>
        <td class="mid"><cad-icon name="lock" size="12"></cad-icon></td>
        <td class="mid">A</td>
        <td class="mid"><cad-icon name="check" size="7"></cad-icon></td>
        <td>In Work</td>`;
      row.querySelector('.label').textContent = name;
      body.appendChild(row);
    });
  }
});

/* ---------- app frame ---------- */

const appTemplate = document.createElement('template');
appTemplate.innerHTML = `
  <style>
    :host { display: grid; grid-template: auto 1fr / 1fr 280px; height: 100vh; overflow: hidden; background: #fff; }
    cad-ribbon { grid-column: 1 / -1; }
    .work { position: relative; display: flex; flex-direction: column; min-width: 0; min-height: 0; }
    model-view { position: absolute; inset: 0; }
    .bar { position: relative; display: flex; justify-content: space-between; height: 12px; padding-right: 47px; }
    view-toolbar { margin-top: 1px; }
    .body { position: relative; flex: 1; display: flex; justify-content: space-between; min-height: 0; }
    task-strip { margin-top: 15px; }
    options-dialog { position: absolute; left: 365px; top: 92px; }
    session-panel { min-height: 0; }
  </style>
  <cad-ribbon></cad-ribbon>
  <div class="work">
    <model-view></model-view>
    <div class="bar"><command-tabs></command-tabs><view-toolbar></view-toolbar></div>
    <div class="body"><feature-tree></feature-tree><task-strip></task-strip></div>
    <options-dialog></options-dialog>
  </div>
  <session-panel></session-panel>
`;
customElements.define('cad-app', class extends HTMLElement {
  constructor() {
    super();
    this.attachShadow({ mode: 'open' }).appendChild(appTemplate.content.cloneNode(true));
  }
});
</script>
</body>
</html>
